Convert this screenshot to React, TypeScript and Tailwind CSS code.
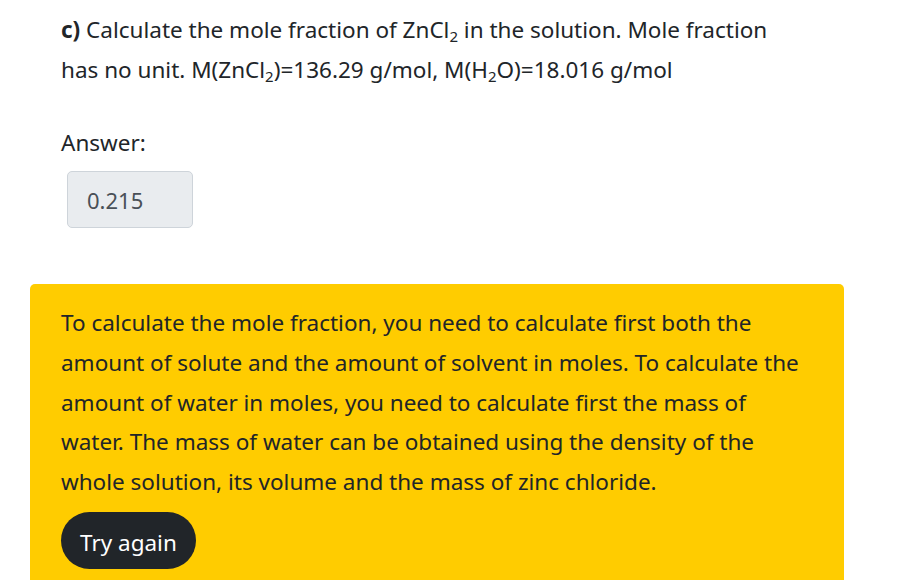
export default function App() {
  return (
    <div
      className="w-[917px] h-[580px] overflow-hidden bg-white text-[#212529] text-[22.5px] leading-[40px]"
      style={{ fontFamily: '"Segoe UI", "Noto Sans", "Open Sans", sans-serif' }}
    >
      <div className="pt-[10px] pl-[61px] pr-[60px]">
        <p>
          <strong className="font-bold">c)</strong> Calculate the mole fraction of ZnCl
          <sub className="text-[15px]">2</sub> in the solution. Mole fraction
          <br />
          has no unit. M(ZnCl<sub className="text-[15px]">2</sub>)=136.29 g/mol, M(H
          <sub className="text-[15px]">2</sub>O)=18.016 g/mol
        </p>
        <div className="mt-[33px]">Answer:</div>
        <div className="mt-[8px] ml-[6px] w-[126px] h-[57px] flex items-center pl-[19px] bg-[#e9ecef] border border-[#ced4da] rounded-[5px] text-[#495057] text-[22px]">
          0.215
        </div>
      </div>
      <div className="mt-[56px] ml-[30px] w-[814px] h-[320px] bg-[#ffcc00] rounded-[5px] pt-[19px] px-[31px]">
        <p className="leading-[39.75px]">
          To calculate the mole fraction, you need to calculate first both the
          <br />
          amount of solute and the amount of solvent in moles. To calculate the
          <br />
          amount of water in moles, you need to calculate first the mass of
          <br />
          water. The mass of water can be obtained using the density of the
          <br />
          whole solution, its volume and the mass of zinc chloride.
        </p>
        <button className="mt-[10px] h-[57px] pt-[5px] px-[19px] rounded-full bg-[#212529] text-white text-[22.5px] leading-none">
          Try again
        </button>
      </div>
    </div>
  );
}
